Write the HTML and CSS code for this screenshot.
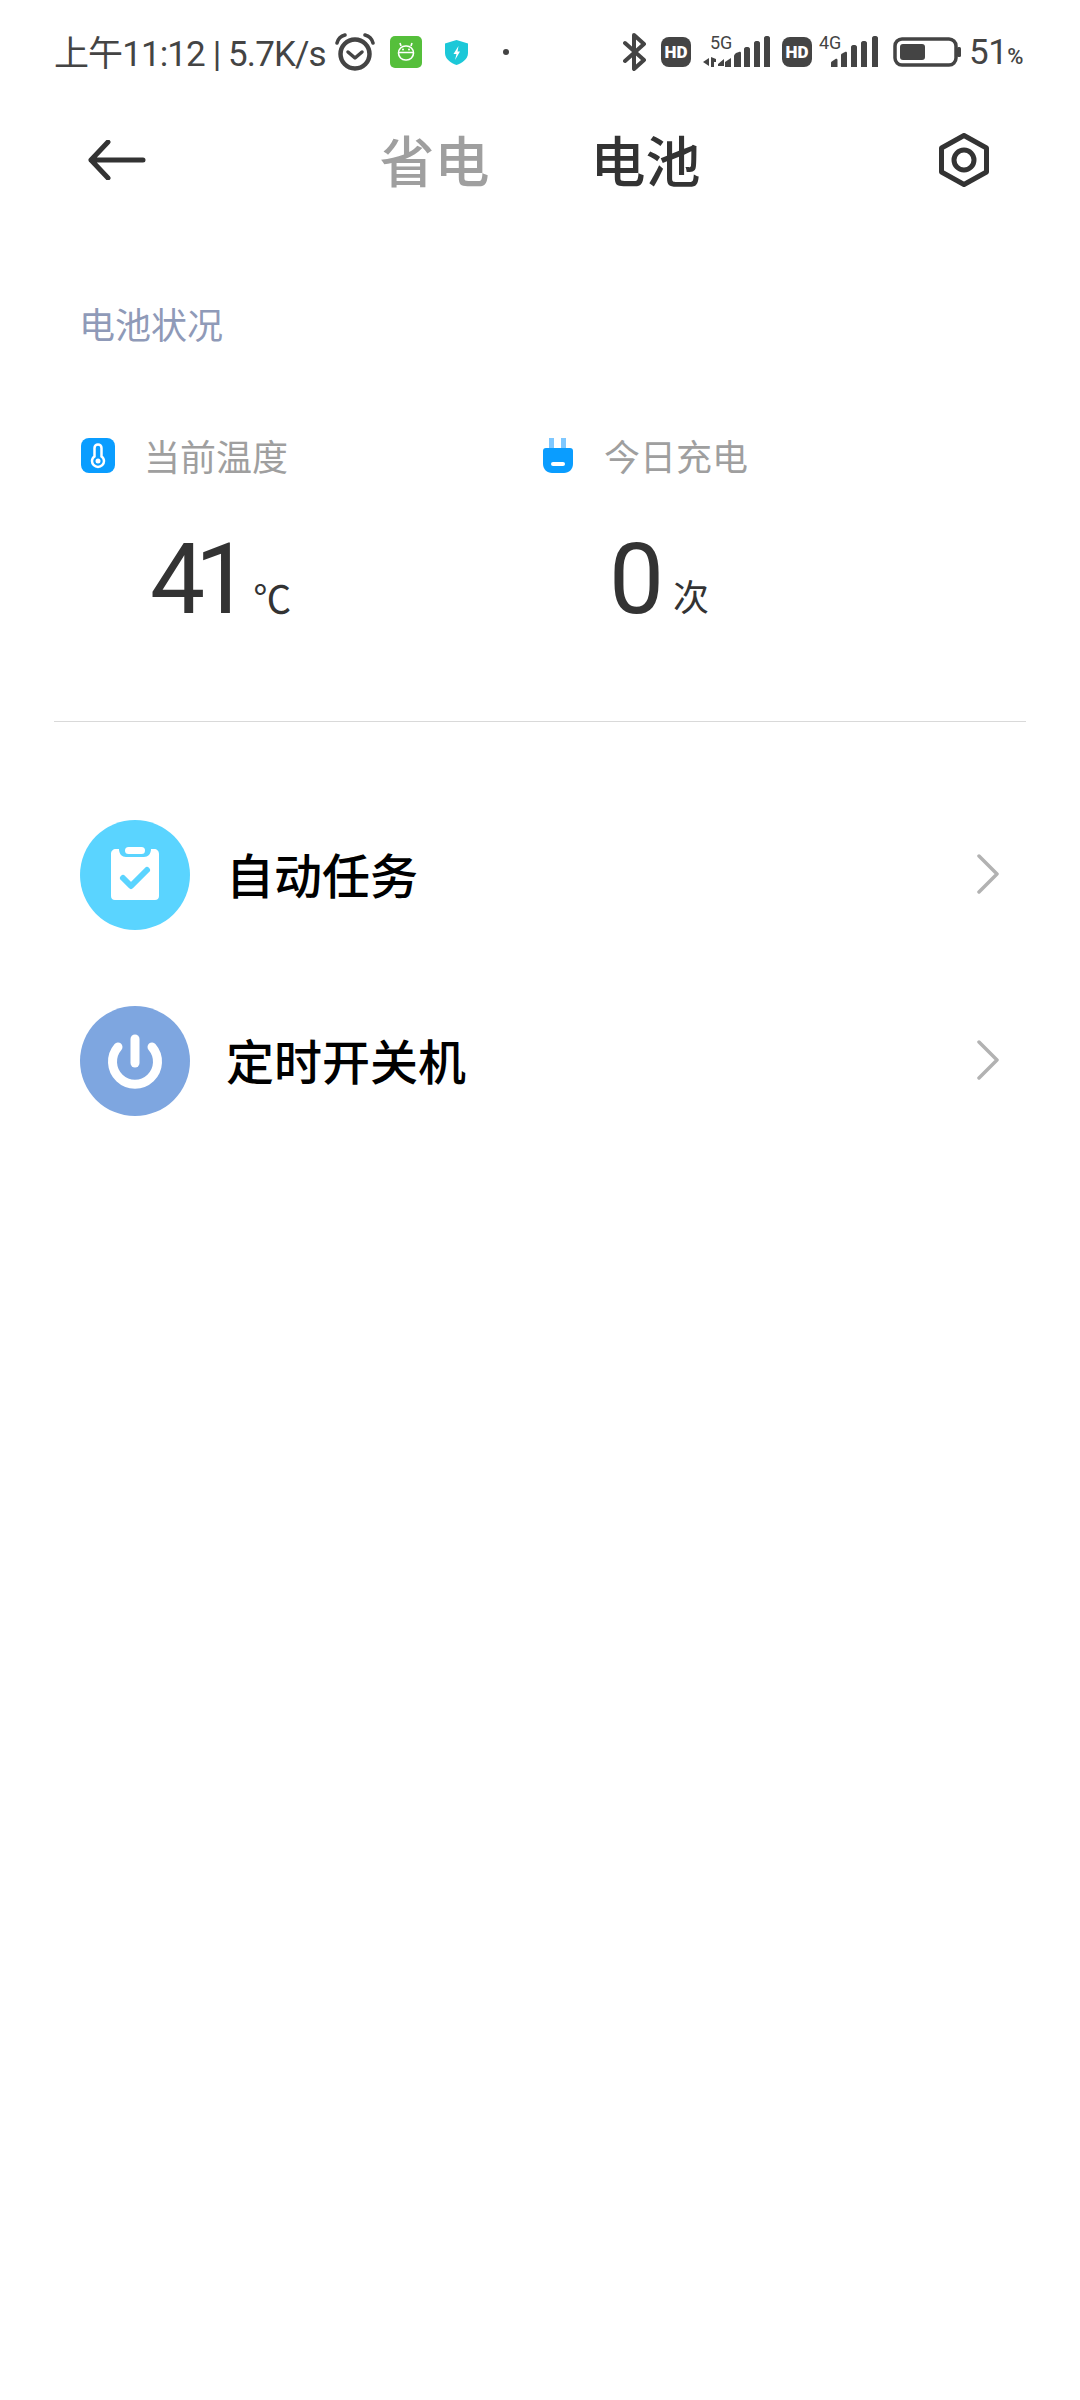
FILE: index.html
```html
<!DOCTYPE html>
<html lang="zh">
<head>
    <meta charset="UTF-8">
    <meta name="viewport" content="width=device-width, initial-scale=1.0">
    <title>电池</title>
    <link rel="stylesheet" href="styles.css">
</head>
<body>
    <div class="status-bar">
        <div class="status-left">
            <span class="status-time">上午11:12 | 5.7K/s</span>
            <svg class="icon-alarm" width="40" height="38" viewBox="0 0 40 38" fill="none" stroke="#444" stroke-linecap="round" stroke-linejoin="round">
                <circle cx="20" cy="21" r="14.5" stroke-width="4.5"/>
                <path d="M13 19l7 6 7-6" stroke-width="3.5"/>
                <path d="M2 10C3 6 6 3 10 2M38 10C37 6 34 3 30 2" stroke-width="3.5"/>
            </svg>
            <svg class="icon-green" width="32" height="32" viewBox="0 0 32 32" fill="none" stroke="#fff" stroke-width="1.6">
                <rect width="32" height="32" rx="5" fill="#55bf3b" stroke="none"/>
                <rect x="8.5" y="10" width="15" height="14" rx="7"/>
                <path d="M8.5 16.5h15M11 10l-1-3M21 10l1-3"/>
                <circle cx="13" cy="13.5" r="1" fill="#fff" stroke="none"/>
                <circle cx="19" cy="13.5" r="1" fill="#fff" stroke="none"/>
            </svg>
            <svg class="icon-shield" width="23" height="25" viewBox="0 0 23 25">
                <path d="M11.5 0L23 3.5V13C23 19 17 23 11.5 25C6 23 0 19 0 13V3.5Z" fill="#1cc8d8"/>
                <path d="M13.5 6L8.5 14H11.5L10 20L15 11.5H12.5Z" fill="#fff"/>
            </svg>
            <span class="status-dot"></span>
        </div>
        <div class="status-right">
            <svg class="icon-bt" width="24" height="38" viewBox="0 0 24 38" fill="none" stroke="#444" stroke-width="4" stroke-linecap="round" stroke-linejoin="round">
                <path d="M2 10L21 27L11 36V2L21 11L2 28"/>
            </svg>
            <span class="hd">HD</span>
            <svg class="signal-5g" width="67" height="42" viewBox="0 0 67 42" fill="#444">
                <text class="net-label" x="7" y="18">5G</text>
                <g transform="translate(0 5)">
                    <path d="M0 26l6-4v8zM8 21l5 2v3h-2v5H8zM21 23v7h-6v-2z"/>
                    <path d="M22 31v-5l6-4v9zM31 31V20c0-1 1-2 2-3l3-1c1-.5 2 0 2 1v14zM41 31V13c0-1 1-2 2-2h2c1 0 2 1 2 2v18zM51 31V7c0-1 1-2 2-2h2c1 0 2 1 2 2v24zM61 31V2c0-1 1-2 2-2h2c1 0 2 1 2 2v29z"/>
                </g>
            </svg>
            <span class="hd">HD</span>
            <svg class="signal-4g" width="59" height="42" viewBox="0 0 59 42" fill="#444">
                <text class="net-label" x="0" y="18">4G</text>
                <path transform="translate(0 5)" d="M12 31v-4c0-1 .5-1.500 1.500-2l3-2c1-.5 2 0 2 1v7zM22 31V19c0-1 1-1.500 2-2l2-1c1-.5 2 0 2 1v14zM32 31V11c0-1 1-2 2-2h2c1 0 2 1 2 2v20zM42 31V7c0-1 1-2 2-2h2c1 0 2 1 2 2v24zM53 31V2c0-1 1-2 2-2h2c1 0 2 1 2 2v29z"/>
            </svg>
            <svg class="icon-battery" width="68" height="30" viewBox="0 0 68 30" fill="none">
                <rect x="2" y="2" width="61" height="26" rx="7" stroke="#444" stroke-width="3.500"/>
                <rect x="7" y="7" width="25" height="16" rx="3" fill="#444"/>
                <rect x="64" y="10" width="4" height="10" rx="1.500" fill="#444"/>
            </svg>
            <span class="status-pct">51<small>%</small></span>
        </div>
    </div>

    <div class="nav">
        <svg width="58" height="40" viewBox="0 0 58 40" fill="none" stroke="#333" stroke-width="5" stroke-linecap="round" stroke-linejoin="round">
            <path d="M55 20H3M20 2L3 20L20 38"/>
        </svg>
        <div class="tabs">
            <span class="tab">省电</span>
            <span class="tab active">电池</span>
        </div>
        <svg class="gear" width="50" height="54" viewBox="0 0 50 54" fill="none" stroke="#333" stroke-width="5" stroke-linejoin="round">
            <path d="M25 2.500L47.500 15V39L25 51.500L2.500 39V15Z"/>
            <circle cx="25" cy="27" r="10"/>
        </svg>
    </div>

    <div class="section-title">电池状况</div>

    <div class="stats">
        <div class="stat">
            <div class="stat-label">
                <svg width="34" height="35" viewBox="0 0 34 35">
                    <rect width="34" height="35" rx="8" fill="#0a9dff"/>
                    <path d="M17 6.500c-2 0-3.500 1.500-3.500 3.500v8.500c-1.500 1-2.500 2.800-2.500 4.500 0 3.300 2.700 6 6 6s6-2.700 6-6c0-1.700-1-3.500-2.500-4.500V10c0-2-1.500-3.500-3.500-3.500z" fill="none" stroke="#fff" stroke-width="2.500"/>
                    <circle cx="17" cy="23" r="2.500" fill="#fff"/>
                </svg>
                <span>当前温度</span>
            </div>
            <div class="stat-value">
                <span class="num num-tight">41</span><span class="unit unit-c">℃</span>
            </div>
        </div>
        <div class="stat">
            <div class="stat-label">
                <svg width="30" height="35" viewBox="0 0 30 35">
                    <rect x="6" y="0" width="5" height="11" fill="#7fc8ff"/>
                    <rect x="18" y="0" width="5" height="11" fill="#7fc8ff"/>
                    <path d="M0 13c0-2 1-3 3-3h24c2 0 3 1 3 3v13c0 5-4 9-9 9H9c-5 0-9-4-9-9z" fill="#0a9dff"/>
                    <rect x="8" y="24" width="14" height="4" rx="2" fill="#fff"/>
                </svg>
                <span>今日充电</span>
            </div>
            <div class="stat-value">
                <span class="num">0</span><span class="unit unit-times">次</span>
            </div>
        </div>
    </div>

    <div class="divider"></div>

    <div class="list">
        <div class="row">
            <svg class="row-icon" width="110" height="110" viewBox="0 0 110 110">
                <circle cx="55" cy="55" r="55" fill="#5ad4ff"/>
                <path d="M36 29H39C39 34 42 37 46 37H64C68 37 71 34 71 29H74C77 29 79 31 79 34V76C79 78.500 77.500 80 75 80H35C32.500 80 31 78.500 31 76V34C31 31 33 29 36 29Z" fill="#fff"/>
                <rect x="45" y="27" width="20" height="7" rx="3.500" fill="#fff"/>
                <path d="M43 58L51 66L67 50" fill="none" stroke="#5ad4ff" stroke-width="6" stroke-linecap="round" stroke-linejoin="round"/>
            </svg>
            <span class="row-text">自动任务</span>
            <svg class="chevron" width="22" height="40" viewBox="0 0 22 40" fill="none" stroke="#b2b2b2" stroke-width="3.500" stroke-linecap="round" stroke-linejoin="round">
                <path d="M2 2L20 20L2 38"/>
            </svg>
        </div>
        <div class="row">
            <svg class="row-icon" width="110" height="110" viewBox="0 0 110 110" fill="none" stroke="#fff" stroke-linecap="round">
                <circle cx="55" cy="55" r="55" fill="#7ea6e0" stroke="none"/>
                <path d="M38 41A22.500 22.500 0 1 0 72 41" stroke-width="9"/>
                <path d="M55 33V57" stroke-width="9"/>
            </svg>
            <span class="row-text">定时开关机</span>
            <svg class="chevron" width="22" height="40" viewBox="0 0 22 40" fill="none" stroke="#b2b2b2" stroke-width="3.500" stroke-linecap="round" stroke-linejoin="round">
                <path d="M2 2L20 20L2 38"/>
            </svg>
        </div>
    </div>
</body>
</html>
```

FILE: styles.css
```css
* {
    margin: 0;
    padding: 0;
    box-sizing: border-box;
}

body {
    width: 1080px;
    min-height: 2400px;
    background: #fff;
    font-family: Roboto, "Noto Sans CJK SC", sans-serif;
}

svg {
    display: block;
    flex-shrink: 0;
}

.status-bar {
    display: flex;
    justify-content: space-between;
    align-items: center;
    height: 104px;
    padding: 0 60px 0 54px;
    color: #444;
}

.status-left,
.status-right {
    display: flex;
    align-items: center;
}

.status-time {
    width: 281px;
    padding-bottom: 3px;
    font-size: 35px;
    letter-spacing: -0.9px;
    white-space: nowrap;
}

.icon-green {
    margin-left: 15px;
}

.icon-shield {
    margin-left: 23px;
}

.status-dot {
    width: 6px;
    height: 6px;
    margin-left: 35px;
    border-radius: 50%;
    background: #444;
}

.hd {
    width: 30px;
    height: 30px;
    margin: 0 12px 0 14px;
    border-radius: 8px;
    background: #444;
    color: #fff;
    font-size: 17px;
    font-weight: 900;
    line-height: 30px;
    text-align: center;
}

.signal-5g + .hd {
    margin: 0 7px 0 12px;
}

.net-label {
    font-size: 18px;
    fill: #444;
}

.icon-battery {
    margin-left: 15px;
}

.status-pct {
    width: 51px;
    margin-left: 8px;
    font-size: 35px;
    letter-spacing: -0.5px;
    white-space: nowrap;
}

.status-pct small {
    font-size: 22px;
    font-weight: 500;
}

.nav {
    display: grid;
    grid-template-columns: 1fr auto 1fr;
    align-items: center;
    height: 112px;
    padding: 0 88px;
}

.tabs {
    display: flex;
    gap: 101px;
    padding-top: 5px;
}

.gear {
    justify-self: end;
    margin-right: 3px;
}

.tab {
    font-size: 55px;
    font-weight: 500;
    line-height: 70px;
    color: #9f9f9f;
}

.tab.active {
    color: #333;
}

.section-title {
    margin: 86px 0 0 79px;
    font-size: 36px;
    line-height: 50px;
    color: #8f9ab8;
}

.stats {
    display: grid;
    grid-template-columns: 462px 1fr;
    margin: 78px 0 0 81px;
}

.stat-label {
    display: flex;
    align-items: center;
    height: 50px;
    font-size: 36px;
    color: #9f9f9f;
}

.stat-label span {
    margin-left: 29px;
}

.stat:last-child .stat-label span {
    margin-left: 31px;
}

.stat-value {
    height: 100px;
    margin-top: 50px;
    padding-left: 69px;
    color: #333;
    line-height: 100px;
    white-space: nowrap;
}

.stat:last-child .stat-value {
    padding-left: 66px;
}

.num {
    font-size: 98px;
    line-height: 100px;
}

.num-tight {
    letter-spacing: -10px;
}

.unit {
    margin-left: 9px;
    font-size: 36px;
    line-height: 1;
}

.unit-c {
    margin-left: 13px;
    font-size: 38px;
}

.unit-times {
    vertical-align: 2px;
}

.divider {
    height: 1px;
    margin: 91px 54px 0;
    background: #d9d9d9;
}

.list {
    margin-top: 60px;
}

.row {
    display: flex;
    align-items: center;
    height: 186px;
    padding: 0 81px 0 80px;
}

.row-text {
    flex: 1;
    margin-left: 36px;
    padding-bottom: 4px;
    font-size: 48px;
    font-weight: 500;
    color: #000;
}

.chevron {
    margin-bottom: 3px;
}
```
